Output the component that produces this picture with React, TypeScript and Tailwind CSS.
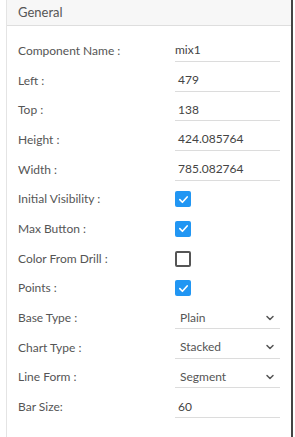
import { ChevronDown } from 'lucide-react';

type Row =
    | { label: string; kind: 'text'; value: string }
    | { label: string; kind: 'check'; checked: boolean }
    | { label: string; kind: 'select'; value: string };

const rows: Row[] = [
    { label: 'Component Name :', kind: 'text', value: 'mix1' },
    { label: 'Left :', kind: 'text', value: '479' },
    { label: 'Top :', kind: 'text', value: '138' },
    { label: 'Height :', kind: 'text', value: '424.085764' },
    { label: 'Width :', kind: 'text', value: '785.082764' },
    { label: 'Initial Visibility :', kind: 'check', checked: true },
    { label: 'Max Button :', kind: 'check', checked: true },
    { label: 'Color From Drill :', kind: 'check', checked: false },
    { label: 'Points :', kind: 'check', checked: true },
    { label: 'Base Type :', kind: 'select', value: 'Plain' },
    { label: 'Chart Type :', kind: 'select', value: 'Stacked' },
    { label: 'Line Form :', kind: 'select', value: 'Segment' },
    { label: 'Bar Size:', kind: 'text', value: '60' },
];

function Field({ row }: { row: Row }) {
    if (row.kind === 'check') {
        return row.checked ? (
            <div className="w-[16px] h-[16px] rounded-[2px] bg-[#2196f3] flex items-center justify-center">
                <svg width="11" height="11" viewBox="0 0 12 12" fill="none">
                    <path d="M2 6.2 L4.8 9 L10 3.2" stroke="white" strokeWidth="1.8" strokeLinecap="round" strokeLinejoin="round" />
                </svg>
            </div>
        ) : (
            <div className="w-[16px] h-[16px] rounded-[2px] border-2 border-[#555]" />
        );
    }
    if (row.kind === 'select') {
        return (
            <div className="w-[105px] h-[22px] border-b border-[#dcdcdc] flex items-center justify-between pl-[5px] pr-[4px]">
                <span className="text-[12px] text-[#555]">{row.value}</span>
                <ChevronDown size={12} strokeWidth={3} className="text-[#555]" />
            </div>
        );
    }
    return (
        <div className={`w-[105px] h-[22px] border-b border-[#dcdcdc] flex items-center ${row.value === 'mix1' ? 'pl-0' : 'pl-[3px]'}`}>
            <span className="text-[12px] text-[#444]">{row.value}</span>
        </div>
    );
}

export default function App() {
    return (
        <div className="w-[295px] h-[437px] bg-white pl-[6px]" style={{ fontFamily: 'Lato, "Open Sans", sans-serif' }}>
            <div className="w-[287px] h-full border-l border-[#e4e4e4] border-r-2 border-r-[#444]">
                <div className="h-[26px] bg-[#f7f7f7] border-b border-[#dedede] flex items-center pl-[11px]">
                    <span className="text-[13px] text-[#555]">General</span>
                </div>
                <div className="pt-[10px]">
                    {rows.map((row) => (
                        <div key={row.label} className="h-[29.7px] flex items-center">
                            <div className="w-[168px] pl-[11px] text-[12px] text-[#555]">{row.label}</div>
                            <Field row={row} />
                        </div>
                    ))}
                </div>
            </div>
        </div>
    );
}
